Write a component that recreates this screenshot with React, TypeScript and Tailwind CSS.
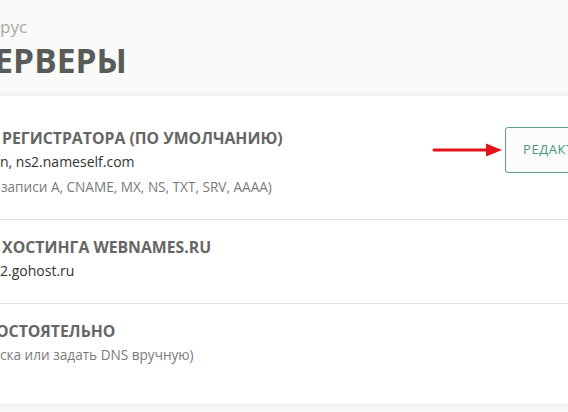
import React from "react";

const font = { fontFamily: '"Open Sans", "Liberation Sans", sans-serif' };

function Arrow() {
  return (
    <svg width="72" height="16" viewBox="0 0 72 16" className="shrink-0">
      <line x1="2" y1="8" x2="56" y2="8" stroke="#e3121b" strokeWidth="3" strokeLinecap="round" />
      <polygon points="54,1.5 70,8 54,14.5" fill="#e3121b" />
    </svg>
  );
}

export default function App() {
  return (
    <div
      className="w-[568px] h-[412px] overflow-hidden bg-[#fafaf8] flex flex-col"
      style={font}
    >
      {/* Header */}
      <div className="pt-[16px] h-[96px] shrink-0">
        <div className="text-[17px] leading-[22px] text-[#a9a9a9]">рус</div>
        <h1 className="mt-[2px] -ml-[27px] text-[33.5px] leading-[40px] font-bold text-[#585b58] whitespace-nowrap">
          СЕРВЕРЫ
        </h1>
      </div>

      {/* Card */}
      <div className="bg-white shadow-[0_0_8px_rgba(0,0,0,0.09)] -mx-4 px-4">
        {/* Registrar DNS */}
        <div className="flex items-start pt-[31px] pb-[20px] border-b border-[#dedede]">
          <div className="w-[432px] shrink-0 whitespace-nowrap overflow-hidden">
            <div className="text-[15.8px] leading-[22px] font-bold text-[#666] -ml-[2px]">
              &nbsp;РЕГИСТРАТОРА (ПО УМОЛЧАНИЮ)
            </div>
            <div className="text-[14px] leading-[26px] text-[#333]">n, ns2.nameself.com</div>
            <div className="text-[13.6px] leading-[24px] text-[#7a7a7a] ml-[1px]">
              записи A, CNAME, MX, NS, TXT, SRV, AAAA)
            </div>
          </div>
          <div className="flex items-center shrink-0">
            <Arrow />
            <button className="ml-[1px] h-[46px] px-[17px] rounded-[3px] border border-[#5f9f86] bg-[#fbfcfb] text-[13px] tracking-[0.6px] text-[#4a987a] whitespace-nowrap">
              РЕДАКТИРОВАТЬ
            </button>
          </div>
        </div>

        {/* Hosting DNS */}
        <div className="pt-[16px] pb-[19px] border-b border-[#dedede] whitespace-nowrap">
          <div className="text-[15.8px] leading-[22px] font-bold text-[#666] -ml-[2px]">
            &nbsp;ХОСТИНГА WEBNAMES.RU
          </div>
          <div className="text-[14px] leading-[26px] text-[#333]">2.gohost.ru</div>
        </div>

        {/* Custom DNS */}
        <div className="pt-[16px] pb-[36px] whitespace-nowrap">
          <div className="text-[15.8px] leading-[22px] font-bold text-[#666] -ml-[4px]">
            ОСТОЯТЕЛЬНО
          </div>
          <div className="text-[13.6px] leading-[26px] text-[#7a7a7a]">
            ска или задать DNS вручную)
          </div>
        </div>
      </div>
    </div>
  );
}
